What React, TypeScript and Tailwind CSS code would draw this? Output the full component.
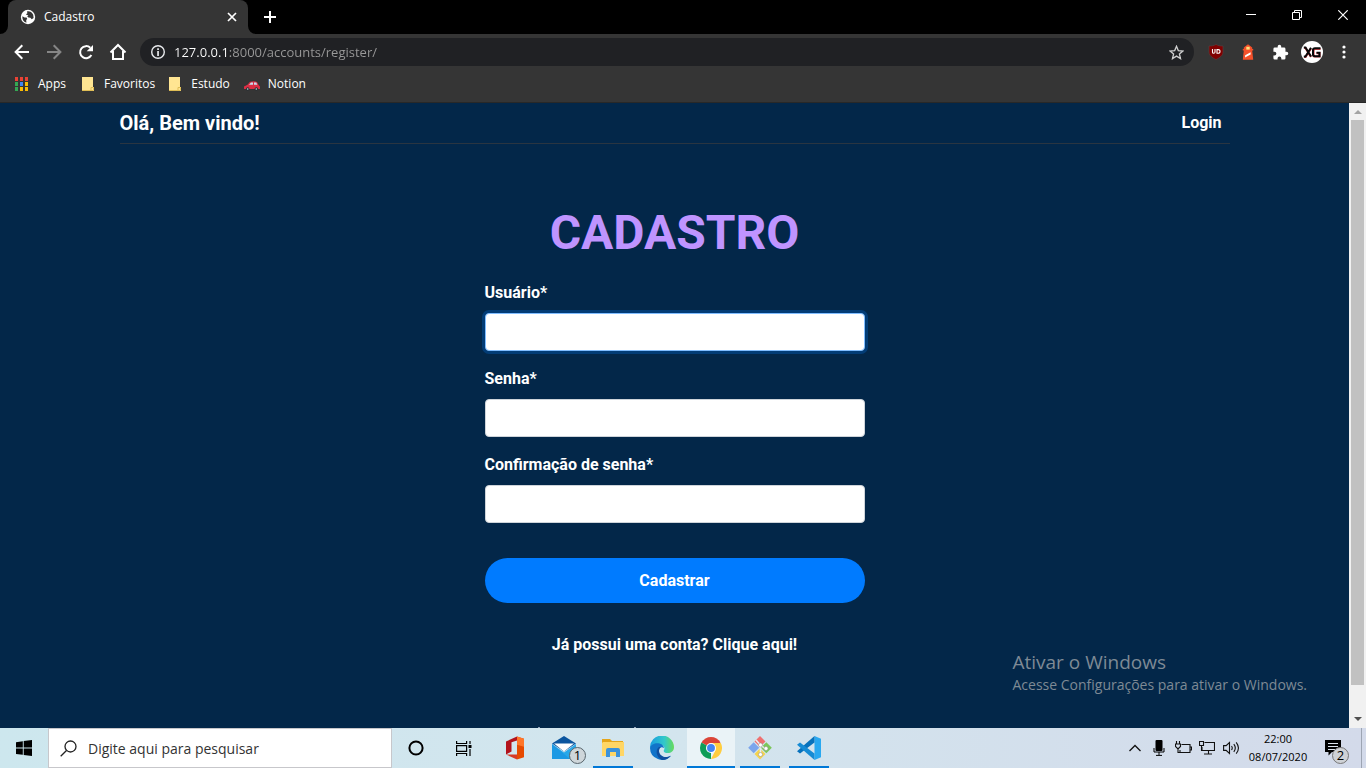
import React from "react";

const icon = "shrink-0";

function BrowserTabs() {
  return (
    <div className="flex h-[34px] shrink-0 items-stretch bg-black pl-2">
      <div className="relative flex w-60 items-center rounded-t-lg bg-[#353535] pl-3 pr-2">
        <svg className="absolute bottom-0 -left-2" width="8" height="8" aria-hidden="true">
          <path d="M8 0v8H0a8 8 0 0 0 8-8z" fill="#353535" />
        </svg>
        <svg className="absolute -right-2 bottom-0" width="8" height="8" aria-hidden="true">
          <path d="M0 0v8h8a8 8 0 0 1-8-8z" fill="#353535" />
        </svg>
        <svg className={icon} width="16" height="16" viewBox="0 0 16 16" aria-hidden="true">
          <circle cx="8" cy="8" r="7.200" fill="#fff" />
          <path d="M2.400 7.200l2.200 1.200 2 .2.600 1.500-1 1 .2 2.600A6 6 0 0 1 2.400 7.200zM7 2.500c2-.6 5 .4 6.200 3.200l.4 3.200-1.900 1.400-1.300-1.600-2-.2-1.200-1.200 1.200-1.200H6.800L6 5.200l1.400-1z" fill="#353535" />
        </svg>
        <span className="ml-2 grow text-[12px] leading-4 text-white">Cadastro</span>
        <button aria-label="Fechar guia" className="flex size-4 items-center justify-center">
          <svg width="10" height="10" viewBox="0 0 10 10" stroke="#fff" strokeWidth="1.700"><path d="M1 1l8 8M9 1L1 9" /></svg>
        </button>
      </div>
      <button aria-label="Nova guia" className="ml-2 flex w-7 items-center justify-center">
        <svg width="12" height="12" viewBox="0 0 12 12" stroke="#fff" strokeWidth="2"><path d="M6 0v12M0 6h12" /></svg>
      </button>
      <div className="ml-auto flex pb-1">
        <button aria-label="Minimizar" className="flex w-[46px] items-center justify-center">
          <svg width="10" height="10" viewBox="0 0 10 10"><path d="M0 4h10v1H0z" fill="#fff" /></svg>
        </button>
        <button aria-label="Restaurar" className="flex w-[46px] items-center justify-center">
          <svg width="10" height="10" viewBox="0 0 10 10" fill="none" stroke="#fff"><path d="M.5 2.500h7v7h-7zM2.500 2.500v-2h7v7h-2" /></svg>
        </button>
        <button aria-label="Fechar" className="flex w-[46px] items-center justify-center">
          <svg width="10" height="10" viewBox="0 0 10 10" stroke="#fff" strokeWidth="1.200"><path d="M.3.3l9.400 9.400M9.700.3L.3 9.700" /></svg>
        </button>
      </div>
    </div>
  );
}

function ToolButton({ label, children }: { label: string; children: React.ReactNode }) {
  return (
    <button aria-label={label} className="flex size-8 shrink-0 items-center justify-center">
      {children}
    </button>
  );
}

function AddressBar() {
  return (
    <div className="flex h-9 shrink-0 items-center bg-[#353535] px-[6px]">
      <ToolButton label="Voltar">
        <svg width="16" height="16" viewBox="0 0 16 16" fill="none" stroke="#fff" strokeWidth="2"><path d="M15 8H2M8.300 1.300L1.600 8l6.700 6.700" /></svg>
      </ToolButton>
      <ToolButton label="Avançar">
        <svg width="16" height="16" viewBox="0 0 16 16" fill="none" stroke="#868686" strokeWidth="2"><path d="M1 8h13M7.700 1.300L14.400 8l-6.700 6.700" /></svg>
      </ToolButton>
      <ToolButton label="Recarregar">
        <svg width="16" height="16" viewBox="0 0 16 16"><path d="M13.400 11A6 6 0 1 1 12.300 3.800" fill="none" stroke="#fff" strokeWidth="2" /><path d="M15 1v6.300H8.700z" fill="#fff" /></svg>
      </ToolButton>
      <ToolButton label="Página inicial">
        <svg width="18" height="18" viewBox="0 0 18 18" fill="none" stroke="#fff" strokeWidth="2"><path d="M1.500 9.500L9 2l7.500 7.500M4 8v8h10V8" /></svg>
      </ToolButton>
      <div className="mx-[6px] flex h-7 min-w-0 grow items-center rounded-full bg-[#202124] px-[10px]">
        <svg className={icon} width="16" height="16" viewBox="0 0 16 16" aria-hidden="true">
          <circle cx="8" cy="8" r="6.300" fill="none" stroke="#e8eaed" strokeWidth="1.400" />
          <path d="M7.200 4.200h1.700v1.700H7.200zM7.200 7h1.700v5H7.200z" fill="#e8eaed" />
        </svg>
        <input
          aria-label="Endereço"
          type="text"
          defaultValue="127.0.0.1:8000/accounts/register/"
          className="ml-2 h-6 min-w-0 grow bg-[linear-gradient(90deg,#ffffff_54px,#9a9a9a_54px)] bg-clip-text text-[13px] text-transparent outline-none"
        />
        <button aria-label="Adicionar aos favoritos" className="flex size-4 items-center justify-center">
          <svg width="15" height="15" viewBox="0 0 15 15" fill="none" stroke="#d0d0d0" strokeWidth="1.300"><path d="M7.500 1.300l1.800 4.300 4.600.4-3.500 3 1.100 4.600-4-2.500-4 2.500L4.600 9 1.100 6l4.600-.4z" /></svg>
        </button>
      </div>
      <ToolButton label="uBlock">
        <svg width="16" height="16" viewBox="0 0 16 16"><path d="M8 .4c2 1.300 4 1.600 7 1.600v6c0 3.500-3 5.500-7 7.600C4 13.500 1 11.500 1 8V2C4 2 6 1.700 8 .4z" fill="#800000" stroke="#5b4040" strokeWidth=".6" /><path d="M4.500 5v3.200q0 1 1.200 1T7 8.200V5M9 5.600v3.700h1q2 0 2-1.900t-2-1.800z" fill="none" stroke="#fff" strokeWidth="1.100" /></svg>
      </ToolButton>
      <ToolButton label="Lighthouse">
        <svg width="16" height="16" viewBox="0 0 16 16"><path d="M3.800 5V3.400L8 .2l4.200 3.200V5h1v1.600h-1l1 9.200H2.800l1-9.200h-1V5z" fill="#f4502a" /><path d="M6.300 2.800h3.400v2.800H6.300z" fill="#ffe27a" /><path d="M5.200 11.200l5.400-3v2.300l-5.600 3z" fill="#fff" /></svg>
      </ToolButton>
      <ToolButton label="Extensões">
        <svg width="17" height="17" viewBox="0 0 24 24"><path d="M20.500 11H19V7a2 2 0 0 0-2-2h-4V3.500a2.500 2.500 0 0 0-5 0V5H4a2 2 0 0 0-2 2v3.800h1.500a2.700 2.700 0 0 1 0 5.400H2V20a2 2 0 0 0 2 2h3.800v-1.500a2.700 2.700 0 0 1 5.400 0V22H17a2 2 0 0 0 2-2v-4h1.500a2.500 2.500 0 0 0 0-5z" fill="#fff" /></svg>
      </ToolButton>
      <ToolButton label="Perfil">
        <svg width="22" height="22" viewBox="0 0 22 22"><circle cx="11" cy="11" r="11" fill="#fff" /><path d="M3 7h1.500l5.500 9M3 16h1.500l5.500-8.500M19.500 8h-5.500q-1.500 0-1.500 1.500v4.500q0 1.500 1.500 1.500h4.500v-3.300h-3" fill="none" stroke="#d5454c" strokeWidth="2.200" /><path d="M2.800 6.500h1.700l5.500 9M2.800 15.500h1.700l5.500-8.700M19.500 7.300h-5.500q-2 0-2 1.700v4.500q0 1.700 2 1.700h4.500v-3.400h-3" fill="none" stroke="#080808" strokeWidth="2" /></svg>
      </ToolButton>
      <ToolButton label="Menu">
        <svg width="4" height="14" viewBox="0 0 4 14" fill="#fff"><circle cx="2" cy="2" r="1.600" /><circle cx="2" cy="7" r="1.600" /><circle cx="2" cy="12" r="1.600" /></svg>
      </ToolButton>
    </div>
  );
}

function Folder() {
  return (
    <svg className={icon} width="12" height="14" viewBox="0 0 12 14" aria-hidden="true">
      <path d="M0 0h11v10h1v4H0z" fill="#ffe592" /><path d="M0 13.500h9V10.500h2.500V13.500H9" fill="none" stroke="#dfbd55" />
    </svg>
  );
}

const appColors = ["#ea4335", "#ea4335", "#ea4335", "#34a853", "#4285f4", "#fbbc05", "#34a853", "#fbbc05", "#fbbc05"];

function Bookmarks() {
  return (
    <nav aria-label="Favoritos" className="flex h-[33px] shrink-0 items-center border-b border-[#282828] bg-[#353535] pb-1 pl-[15px] text-[12px] text-white">
      <a href="#apps" className="flex items-center gap-[10px]">
        <svg width="13" height="14" viewBox="0 0 13 14" aria-hidden="true">
          {appColors.map((c, i) => <rect key={i} x={(i % 3) * 5} y={Math.floor(i / 3) * 5} width="3" height="4" fill={c} />)}
        </svg>
        Apps
      </a>
      <a href="#favoritos" className="ml-4 flex items-center gap-[10px]"><Folder />Favoritos</a>
      <a href="#estudo" className="ml-[14px] flex items-center gap-[10px]"><Folder />Estudo</a>
      <a href="#notion" className="ml-[14px] flex items-center gap-2">
        <svg width="16" height="10" viewBox="0 0 16 10" className="mt-1" aria-hidden="true">
          <path d="M0 5.500l3.500-1.700L6 .8q4-1.300 7 .2l1.600 3L16 5.500V8H0z" fill="#dd2e44" />
          <path d="M5 3.700l2-2.200h2v2.200zM10 1.500h2.200l1.200 2.200H10z" fill="#c8dced" />
          <circle cx="3.700" cy="8" r="1.700" fill="#292f33" /><circle cx="12.300" cy="8" r="1.700" fill="#292f33" /><circle cx="3.700" cy="8" r=".8" fill="#ccd6dd" /><circle cx="12.300" cy="8" r=".8" fill="#ccd6dd" />
        </svg>
        Notion
      </a>
    </nav>
  );
}

function Field({ id, label, type, active }: { id: string; label: string; type: string; active?: boolean }) {
  return (
    <div className="mb-4 flex flex-col gap-2">
      <label htmlFor={id} className="text-base leading-6 font-bold">{label}</label>
      <input
        id={id}
        type={type}
        className={
          active
            ? "h-[38px] w-full rounded-sm border border-[#80bdff] bg-white px-3 text-gray-700 shadow-[0_0_0_3px_rgba(0,123,255,0.25)] outline-none"
            : "h-[38px] w-full rounded-sm border border-[#ced4da] bg-white px-3 text-gray-700 outline-none"
        }
      />
    </div>
  );
}

function RegisterPage() {
  return (
    <main className="flex min-w-0 grow flex-col overflow-hidden bg-[#032749] font-['Roboto','Liberation_Sans',sans-serif] text-white">
      <header className="mx-auto flex w-full max-w-[1110px] shrink-0 items-center justify-between border-b border-[#343a40]/80 pt-[5px] pb-[5px] pr-2">
        <span className="text-xl leading-[30px] font-bold">Olá, Bem vindo!</span>
        <a href="#login" className="text-base leading-6 font-bold">Login</a>
      </header>
      <form className="mx-auto mt-[60px] flex w-[380px] shrink-0 flex-col" onSubmit={(e) => e.preventDefault()}>
        <h1 className="mb-[19px] text-center text-5xl leading-[58px] font-bold text-[#bf94ff]">CADASTRO</h1>
        <Field id="usuario" label="Usuário*" type="text" active />
        <Field id="senha" label="Senha*" type="password" />
        <Field id="confirmacao" label="Confirmação de senha*" type="password" />
        <button type="submit" className="mt-[19px] h-[45px] rounded-full bg-[#007bff] text-base font-bold">Cadastrar</button>
        <a href="#entrar" className="mt-[30px] text-center text-base leading-6 font-bold">Já possui uma conta? Clique aqui!</a>
      </form>
      <div aria-hidden="true" className="mx-auto mt-auto flex h-px w-[98px] shrink-0 -translate-x-22 justify-between">
        <span className="w-[2px] bg-slate-400" /><span className="w-[2px] bg-slate-400" />
      </div>
    </main>
  );
}

function ScrollBar() {
  return (
    <div aria-hidden="true" className="flex w-[17px] shrink-0 flex-col items-center bg-[#f1f1f1]">
      <svg className={icon} width="17" height="17"><path d="M5 11h8L9 7z" fill="#a3a3a3" /></svg>
      <div className="w-[13px] grow bg-[#c1c1c1]" />
      <svg className="mt-[26px] shrink-0" width="17" height="17"><path d="M5 6h8L9 10z" fill="#505050" /></svg>
    </div>
  );
}

function TaskApp({ label, state, children }: { label: string; state?: "open" | "active"; children: React.ReactNode }) {
  return (
    <button aria-label={label} className={state === "active" ? "relative flex w-12 items-center justify-center bg-[#eaf3f7]" : "relative flex w-12 items-center justify-center"}>
      {children}
      {state === "open" && <span className="absolute inset-x-1 bottom-0 h-[2px] bg-[#0078d7]" />}
      {state === "active" && <span className="absolute inset-x-0 bottom-0 h-[2px] bg-[#0078d7]" />}
    </button>
  );
}

function TrayIcon({ label, children }: { label: string; children: React.ReactNode }) {
  return <button aria-label={label} className="flex w-6 items-center justify-center">{children}</button>;
}

function Taskbar() {
  return (
    <footer className="flex h-10 shrink-0 bg-linear-to-r from-[#cde7ee] via-[#d3e5ee] to-[#d3daea] text-black">
      <button aria-label="Iniciar" className="flex w-12 items-center justify-center">
        <svg width="16" height="16" viewBox="0 0 16 16"><path d="M0 2.200L6.800 1.200v6.300H0zM7.700 1.100L16 0v7.500H7.700zM0 8.400h6.800v6.400L0 13.900zM7.700 8.400H16V16l-8.300-1.100z" /></svg>
      </button>
      <label className="flex w-[344px] items-center border border-[#c7c7cb] bg-white pl-[11px]">
        <svg width="17" height="17" viewBox="0 0 17 17" fill="none" stroke="#222" strokeWidth="1.300"><circle cx="10.500" cy="6.500" r="5.500" /><path d="M6.500 10.500L.7 16.300" /></svg>
        <input aria-label="Pesquisar" placeholder="Digite aqui para pesquisar" className="ml-[11px] min-w-0 grow text-[14px] outline-none placeholder:text-[#333]" />
      </label>
      <div className="flex">
        <TaskApp label="Cortana"><svg width="16" height="16" viewBox="0 0 16 16"><circle cx="8" cy="8" r="6.600" fill="none" stroke="#000" strokeWidth="2" /></svg></TaskApp>
        <TaskApp label="Visão de tarefas"><svg width="16" height="15" viewBox="0 0 16 15" fill="none" stroke="#000" strokeWidth="1.200"><path d="M.6 0v2.500h10V0M.6 15v-2.500h10V15M.6 4.600h10v5.800H.6zM14 0v3M14 8v7" /><path d="M12.500 4h3v3h-3z" fill="#000" stroke="none" /></svg></TaskApp>
      </div>
      <div className="ml-[3px] flex gap-px">
        <TaskApp label="Office">
          <svg width="20" height="24" viewBox="0 0 20 24"><path d="M1 5.500L12 .5v4L6.500 6.200v9.300L1 18.500z" fill="#b3131c" /><path d="M12 .5L19 2.700v18.600l-7 2.200z" fill="#e64a00" /><path d="M12 .5L19 2.700v8l-7-2z" fill="#ff7629" /><path d="M1 18.500h11v5z" fill="#d63a27" /></svg>
        </TaskApp>
        <TaskApp label="Email, 1 nova">
          <svg width="24" height="24" viewBox="0 0 24 24"><path d="M0 7.500L12 0l12 7.500-12 8z" fill="#0b559f" /><path d="M2 7.500h20l-10 8z" fill="#fff" /><path d="M0 8l12 8.500L24 8v15H0z" fill="#28a8ea" /><path d="M0 8l18 15H0z" fill="#1490df" opacity=".6" /></svg>
          <span className="absolute right-[2px] bottom-1 flex size-[17px] items-center justify-center rounded-full border border-[#58656c] bg-[#ced6da] text-[13px] leading-none">1</span>
        </TaskApp>
        <TaskApp label="Explorador de Arquivos" state="open">
          <svg width="22" height="20" viewBox="0 0 22 20"><path d="M0 1h8l2 2h11v6H0z" fill="#e5a51a" /><path d="M1 4h21v14H0V5z" fill="#ffd665" /><path d="M4 19v-7q0-2 2-2h10q2 0 2 2v7h-4v-5H8v5z" fill="#3b92da" /></svg>
        </TaskApp>
        <TaskApp label="Edge">
          <svg width="24" height="24" viewBox="0 0 24 24">
            <defs><linearGradient id="edgeTop"><stop stopColor="#1a9de0" /><stop offset=".6" stopColor="#32c8ca" /><stop offset="1" stopColor="#68db59" /></linearGradient></defs>
            <path d="M0 12A12 12 0 0 1 24 11c0 4-3 6-6 6-3.500 0-5-1.500-4-3 1-1.800.4-5-3.500-5S2 10 0 12z" fill="url(#edgeTop)" />
            <path d="M0 12C1 8 6 6.500 9.500 7.500c3 .8 4.500 3 4.500 4.500-3-2-5 0-5 3 0 5 6 8 12 4.700A12 12 0 0 1 0 12z" fill="#1274c9" />
            <path d="M9 11c-4 3-3 10 3 13a12 12 0 0 0 9-4.300C15 23 9 20 9 15c0-2 .6-3.300 2-4z" fill="#104f9f" />
          </svg>
        </TaskApp>
        <TaskApp label="Chrome" state="active">
          <svg width="22" height="22" viewBox="0 0 24 24"><path d="M12 12L1.610 6A12 12 0 0 1 22.390 6z" fill="#db4437" /><path d="M12 12V24A12 12 0 0 1 1.610 6z" fill="#0f9d58" /><path d="M12 6.500h10.700a12 12 0 0 1-10.700 17.500l4.800-9.200z" fill="#ffcd40" /><circle cx="12" cy="12" r="5.500" fill="#fff" /><circle cx="12" cy="12" r="4.300" fill="#4285f4" /></svg>
        </TaskApp>
        <TaskApp label="Git Bash" state="open">
          <svg width="24" height="24" viewBox="0 0 24 24"><path d="M12 0l5.500 5.500L12 11 6.500 5.500z" fill="#ef7070" /><path d="M5.700 6.300l5.500 5.500-5.500 5.500L.2 11.800z" fill="#7ba5ec" /><path d="M18.300 6.300l5.500 5.500-5.500 5.500-5.500-5.500z" fill="#7cc65a" /><path d="M12 12.600l5.500 5.500L12 23.600l-5.500-5.500z" fill="#f5d34e" /><path d="M8 4l4.500 5v10M12.500 9l5 4" stroke="#e8edef" strokeWidth="1.600" fill="none" /><g fill="#fff" stroke="#8a8a8a" strokeWidth=".5"><circle cx="12.500" cy="9" r="2" /><circle cx="12.500" cy="18.500" r="2" /><circle cx="18" cy="12.500" r="2" /></g></svg>
        </TaskApp>
        <TaskApp label="Visual Studio Code" state="open">
          <svg width="24" height="24" viewBox="0 0 24 24"><path d="M17.500 0L24 2.800v18.400L17.500 24z" fill="#29a8f0" /><path d="M17.500 0v6.500L3 17.500 0 15.200z" fill="#0872bc" /><path d="M17.500 24v-6.500L3 6.500 0 8.800z" fill="#168bd4" /></svg>
        </TaskApp>
      </div>
      <div className="ml-auto flex">
        <TrayIcon label="Ícones ocultos"><svg width="12" height="8" viewBox="0 0 12 8" fill="none" stroke="#111" strokeWidth="1.300"><path d="M.5 7L6 1.500 11.500 7" /></svg></TrayIcon>
        <TrayIcon label="Microfone"><svg width="12" height="16" viewBox="0 0 12 16"><rect x="2.500" width="7" height="11" rx="1" /><path d="M1 8v4h10V8M6 12v3M3 15.400h6" fill="none" stroke="#000" /></svg></TrayIcon>
        <TrayIcon label="Bateria"><svg width="17" height="14" viewBox="0 0 17 14" fill="none" stroke="#111" strokeWidth="1.100"><path d="M6.500 3.500h8.500v8H5V9M15 6h1.500v3H15M1.500 0v3M4.500 0v3M.5 3h5v2.500L3 8 .5 5.500zM3 8v3.500h2" /></svg></TrayIcon>
        <TrayIcon label="Rede"><svg width="16" height="14" viewBox="0 0 16 14" fill="none" stroke="#111" strokeWidth="1.100"><path d="M5.500 1.500h10v8H3V6M.5.5h4v4h-4zM2.500 4.500V10M9.500 9.500v3M5 13h8" /></svg></TrayIcon>
        <TrayIcon label="Volume"><svg width="17" height="14" viewBox="0 0 17 14" fill="none" stroke="#111" strokeWidth="1.100"><path d="M.6 4.600h2.500L6.500 1.500v11L3.100 9.400H.6zM8.500 5q1.500 2 0 4M10.800 3.200q3 3.800 0 7.600M13.200 1.300q4.500 5.700 0 11.400" /></svg></TrayIcon>
        <div className="flex w-[70px] flex-col items-center justify-center text-[11px] leading-[18px]"><span>22:00</span><span>08/07/2020</span></div>
        <button aria-label="Notificações, 2 novas" className="relative flex w-10 items-center justify-center">
          <svg width="16" height="16" viewBox="0 0 16 16"><path d="M0 0h16v12H7l-3.500 3.500V12H0z" /><path d="M3 3.500h10M3 6.500h10M3 9.500h7" stroke="#dce3eb" /></svg>
          <span className="absolute right-1 bottom-1 flex size-[17px] items-center justify-center rounded-full border border-[#777] bg-[#cfd2d6] text-[13px] leading-none">2</span>
        </button>
        <button aria-label="Mostrar área de trabalho" className="ml-2 w-[5px] border-l border-[#9da5b3]" />
      </div>
    </footer>
  );
}

export default function App() {
  return (
    <div className="relative flex h-screen flex-col overflow-hidden font-['Open_Sans','Noto_Sans',sans-serif]">
      <BrowserTabs />
      <AddressBar />
      <Bookmarks />
      <div className="flex min-h-0 grow">
        <RegisterPage />
        <ScrollBar />
      </div>
      <Taskbar />
      <div className="pointer-events-none absolute right-[59px] bottom-[72px] text-[#7e8a95]">
        <p className="text-[19px] leading-6">Ativar o Windows</p>
        <p className="text-[14px] leading-[22px]">Acesse Configurações para ativar o Windows.</p>
      </div>
    </div>
  );
}
